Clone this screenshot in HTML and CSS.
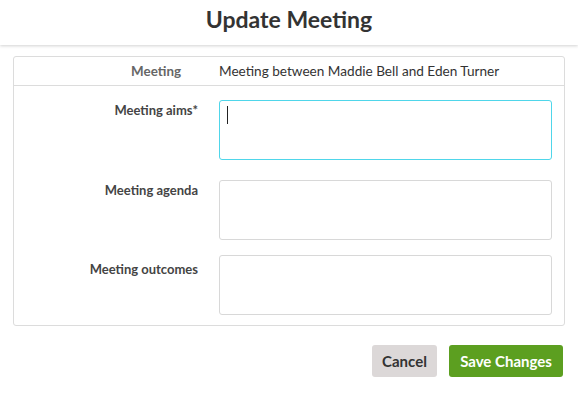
FILE: index.html
```html
<!DOCTYPE html>
<html>
<head>
<meta charset="utf-8">
<link rel="stylesheet" href="styles.css">
</head>
<body>
<header class="header"><h1 class="title">Update Meeting</h1></header>
<main class="content">
  <section class="card">
    <div class="info-row">
      <span class="info-label">Meeting</span>
      <span class="info-value">Meeting between Maddie Bell and Eden Turner</span>
    </div>
    <div class="fields">
      <div class="field">
        <label class="field-label">Meeting aims*</label>
        <div class="input focused"><span class="caret"></span></div>
      </div>
      <div class="field">
        <label class="field-label">Meeting agenda</label>
        <div class="input"></div>
      </div>
      <div class="field field-last">
        <label class="field-label">Meeting outcomes</label>
        <div class="input"></div>
      </div>
    </div>
  </section>
  <div class="actions">
    <button class="btn btn-cancel">Cancel</button>
    <button class="btn btn-save">Save Changes</button>
  </div>
</main>
</body>
</html>
```
FILE: styles.css
```css
* { box-sizing: border-box; }
html, body { margin: 0; padding: 0; background: #fff; }
body { font-family: "Lato", "Open Sans", sans-serif; color: #333; width: 578px; height: 417px; overflow: hidden; }
.header { height: 45px; display: flex; align-items: center; justify-content: center; box-shadow: 0 1px 3px rgba(0,0,0,0.18); position: relative; }
.title { margin: 0; font-size: 23px; font-weight: 700; color: #333; line-height: 1; padding-bottom: 6px; }
.content { padding: 11px 13px 0 13px; }
.card { border: 1px solid #dcdcdc; border-radius: 3px; }
.info-row { display: flex; align-items: center; height: 29px; border-bottom: 1px solid #dcdcdc; font-size: 13.6px; }
.info-label { width: 167px; text-align: right; color: #666; font-weight: 700; font-size: 13.4px; }
.info-value { margin-left: 38px; color: #333; }
.fields { padding: 14px 0 10px; display: flex; flex-direction: column; gap: 20px; }
.field { display: flex; }
.field-last { margin-top: -5px; }
.field-label { width: 184px; text-align: right; font-weight: 700; font-size: 13px; color: #444; padding-top: 2px; }
.field-last .field-label { padding-top: 6px; }
.input { margin-left: 21px; width: 333px; height: 60px; border: 1px solid #d8d8d8; border-radius: 3px; position: relative; }
.input.focused { border-color: #4fd6ea; }
.caret { position: absolute; left: 7px; top: 5px; width: 1px; height: 18px; background: #222; }
.actions { display: flex; justify-content: flex-end; gap: 12px; padding-top: 19px; padding-right: 2px; }
.btn { border: none; border-radius: 3px; height: 32px; font-family: inherit; font-size: 15px; font-weight: 700; padding: 0; text-align: center; }
.btn-cancel { width: 65px; background: #dcd8d8; color: #333; }
.btn-save { width: 114px; background: #5c9f20; color: #fff; }
```
